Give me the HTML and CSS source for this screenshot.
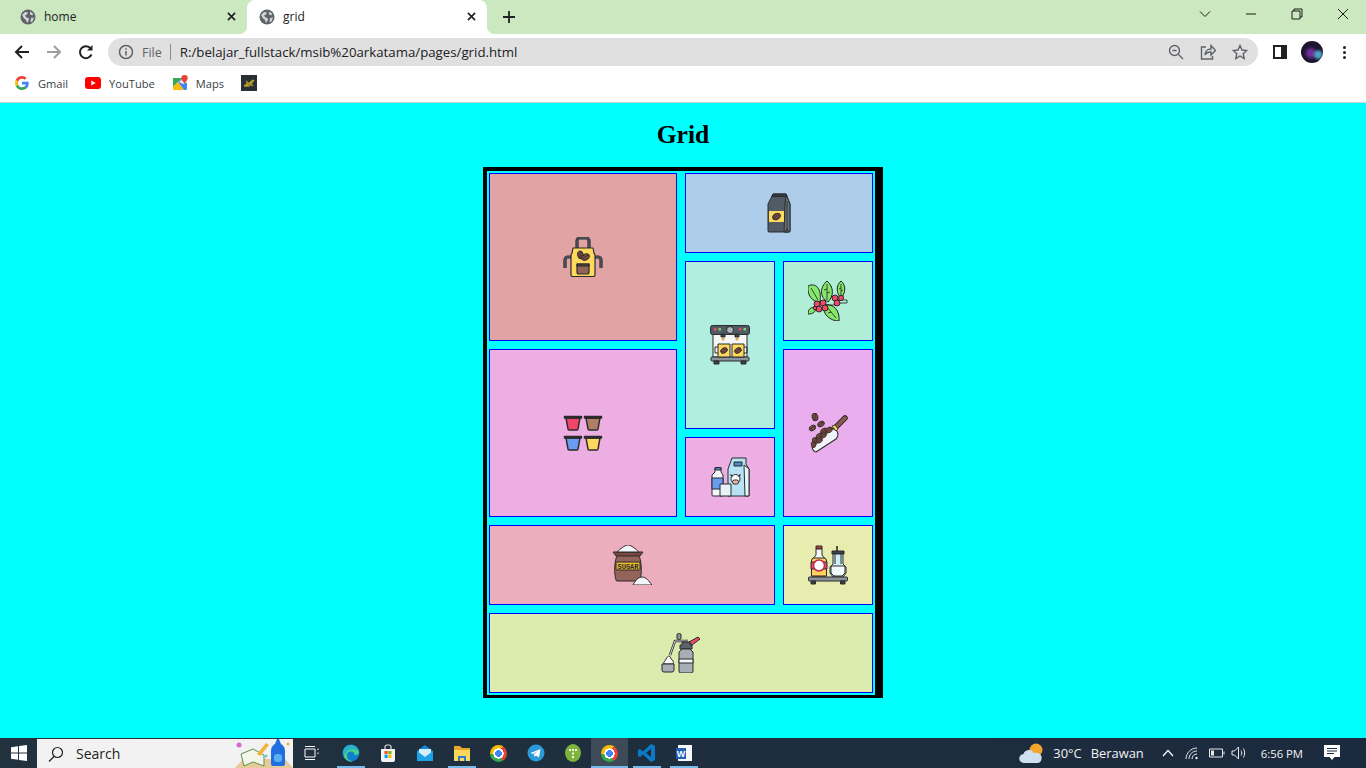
FILE: index.html
```html
<!DOCTYPE html>
<html lang="en">
<head>
<meta charset="utf-8">
<title>grid</title>
<link rel="stylesheet" href="styles.css">
</head>
<body>
<svg class="defs" width="0" height="0" aria-hidden="true">
  <defs>
    <symbol id="globe" viewBox="0 0 16 16">
      <circle cx="8" cy="8" r="7.5" fill="#5f6368"/>
      <path d="M2 6l3-3 3 .5-1 2-2 1 1.500 2 2 .5 .5 2-2 3-1-3-2-1.500zM10 2.500l3 2-.5 2-2.500-1zM11 9l3-.5-1.500 4-2 1z" fill="#cfd2d6"/>
    </symbol>
    <symbol id="bean" viewBox="0 0 10 10">
      <ellipse cx="5" cy="5" rx="4.500" ry="3.200" transform="rotate(-30 5 5)" fill="#7a4a3e" stroke="#2b2b2b"/>
      <path d="M1.500 7c3-.5 3-3.500 7-4" fill="none" stroke="#2b2b2b" stroke-width=".8"/>
    </symbol>
    <symbol id="beanv" viewBox="0 0 10 10">
      <ellipse cx="5" cy="5" rx="3.200" ry="4.500" transform="rotate(-15 5 5)" fill="#7a4a3e" stroke="#2b2b2b"/>
      <path d="M6 1c-2 3 0 5-2 8" fill="none" stroke="#2b2b2b" stroke-width=".8"/>
    </symbol>
  </defs>
</svg>

<header class="chrome-ui">
  <div class="tabstrip">
    <div class="tab tab-home">
      <svg class="fav"><use href="#globe"/></svg>
      <span class="tab-title">home</span>
      <svg class="tab-close" viewBox="0 0 10 10"><path d="M1 1l8 8M9 1l-8 8"/></svg>
    </div>
    <div class="tab tab-active">
      <svg class="fav"><use href="#globe"/></svg>
      <span class="tab-title">grid</span>
      <svg class="tab-close" viewBox="0 0 10 10"><path d="M1 1l8 8M9 1l-8 8"/></svg>
    </div>
    <svg class="newtab" viewBox="0 0 12 12"><path d="M6 0v12M0 6h12"/></svg>
    <div class="winctl">
      <div class="winbtn"><svg viewBox="0 0 12 12" class="wini"><path d="M1 3.500l5 5 5-5"/></svg></div>
      <div class="winbtn"><svg viewBox="0 0 12 12" class="wini"><path d="M1 6h10"/></svg></div>
      <div class="winbtn"><svg viewBox="0 0 12 12" class="wini"><path d="M1 3h8v8h-8zM3 3v-2h8v8h-2"/></svg></div>
      <div class="winbtn"><svg viewBox="0 0 12 12" class="wini"><path d="M1 1l10 10M11 1l-10 10"/></svg></div>
    </div>
  </div>

  <div class="toolbar">
    <div class="tbtn"><svg viewBox="0 0 16 16" class="nav"><path d="M15 8h-13M8 2l-6 6 6 6"/></svg></div>
    <div class="tbtn"><svg viewBox="0 0 16 16" class="nav nav-off"><path d="M1 8h13M8 2l6 6-6 6"/></svg></div>
    <div class="tbtn"><svg viewBox="0 0 16 16" class="nav"><path d="M13.500 10.500a6 6 0 1 1-.8-6"/><path class="solid" d="M14.500 1v5.500h-5.500z"/></svg></div>
    <div class="omnibox">
      <svg class="omni-info" viewBox="0 0 16 16"><circle cx="8" cy="8" r="6.500"/><path d="M8 7v4.500M8 4.300v1.500"/></svg>
      <span class="omni-file">File</span>
      <span class="omni-sep"></span>
      <span class="omni-url">R:/belajar_fullstack/msib%20arkatama/pages/grid.html</span>
      <div class="omni-btn"><svg viewBox="0 0 16 16" class="omni-i"><circle cx="6.500" cy="6.500" r="5"/><path d="M10.500 10.500l4.500 4.500M4.500 6.500h4"/></svg></div>
      <div class="omni-btn"><svg viewBox="0 0 16 16" class="omni-i"><path d="M6 3h-4.500v12h11v-3M5 11c0-4 3-6 6-6v-3.500l4.500 5-4.500 4.500v-3c-3 0-5 1-6 3z"/></svg></div>
      <div class="omni-btn"><svg viewBox="0 0 16 16" class="omni-i"><path d="M8 1.500l2 4.500 4.800.5-3.600 3.200 1 4.800-4.200-2.500-4.200 2.500 1-4.800-3.600-3.200 4.800-.5z"/></svg></div>
    </div>
    <div class="tbtn"><svg viewBox="0 0 14 14" class="panel"><path d="M0 0h14v14h-14zM2 2v10h6v-10z" fill-rule="evenodd"/></svg></div>
    <div class="tbtn"><div class="avatar"></div></div>
    <div class="tbtn"><div class="dots"><i></i><i></i><i></i></div></div>
  </div>

  <div class="bookmarks">
    <div class="bm">
      <svg viewBox="0 0 16 16" class="bm-i">
        <path d="M14.700 8.200c0-.5-.1-1-.1-1.400h-6.600v2.800h3.800a3.200 3.200 0 0 1-1.400 2.100l2.200 1.700c1.300-1.200 2.100-3 2.100-5.200z" fill="#4285f4"/>
        <path d="M8 15c1.900 0 3.400-.6 4.600-1.700l-2.200-1.700c-.6.400-1.400.7-2.400.7-1.800 0-3.400-1.200-3.900-2.900l-2.300 1.800c1.100 2.300 3.500 3.800 6.200 3.800z" fill="#34a853"/>
        <path d="M4.100 9.400c-.3-.9-.3-1.900 0-2.800l-2.300-1.800c-1 1.900-1 4.400 0 6.400z" fill="#fbbc05"/>
        <path d="M8 3.800c1 0 1.900.4 2.600 1l2-2c-1.300-1.100-2.900-1.800-4.600-1.800-2.700 0-5.100 1.500-6.200 3.800l2.300 1.800c.5-1.700 2.100-2.800 3.900-2.800z" fill="#ea4335"/>
      </svg>
      <span>Gmail</span>
    </div>
    <div class="bm">
      <svg viewBox="0 0 16 12" class="bm-i"><rect width="16" height="12" rx="3" fill="#f00"/><path d="M6.300 3.500l4.400 2.500-4.400 2.500z" fill="#fff"/></svg>
      <span>YouTube</span>
    </div>
    <div class="bm">
      <svg viewBox="0 0 16 16" class="bm-i">
        <path d="M1 3h9l-9 9z" fill="#34a853"/><path d="M1 12l5-5 6 8h-10a1 1 0 0 1-1-1z" fill="#fbbc05"/><path d="M6 7l4-4 5 5v6l-1 1h-2z" fill="#4285f4"/>
        <path d="M7 7l6-5 2 2-1 4-3 1z" fill="#e8eaed"/>
        <path d="M12.500 0a3.200 3.200 0 0 1 3.200 3.300c0 2-2.200 3.400-3.200 5.700-1-2.300-3.200-3.700-3.200-5.700a3.200 3.200 0 0 1 3.200-3.300z" fill="#ea4335"/>
      </svg>
      <span>Maps</span>
    </div>
    <svg viewBox="0 0 16 16" class="bm-dark"><rect width="16" height="16" fill="#2a2f33"/><path d="M3 11l4-3-2-2M12 5l-7 6h3l5-6M9 8l3 3" fill="none" stroke="#b59a2a" stroke-width="1.400"/></svg>
  </div>
</header>

<main class="page">
  <h1 class="title">Grid</h1>
  <section class="grid">
    <div class="cell c-apron">
      <svg class="ico" viewBox="0 0 40 40">
        <g stroke="#2b2b2b" stroke-width="1.200" stroke-linejoin="round">
          <path d="M14 12v-8a3 3 0 0 1 3-3h6a3 3 0 0 1 3 3v8" fill="none" stroke-width="3.200"/>
          <path d="M14 12v-8a3 3 0 0 1 3-3h6a3 3 0 0 1 3 3v8" fill="none" stroke="#4f5a66" stroke-width="1.400"/>
          <path d="M9 20h-4a3 3 0 0 0-3 3v8M31 20h4a3 3 0 0 1 3 3v8" fill="none" stroke-width="3.200"/>
          <path d="M9 20h-4a3 3 0 0 0-3 3v8M31 20h4a3 3 0 0 1 3 3v8" fill="none" stroke="#4f5a66" stroke-width="1.400"/>
          <path d="M10 11h20l1 5 1 2v20a1.500 1.500 0 0 1-1.500 1.500h-21a1.500 1.500 0 0 1-1.500-1.500v-20l1-2z" fill="#ffd95e"/>
          <path d="M14 27h12v8a2 2 0 0 1-2 2h-8a2 2 0 0 1-2-2z" fill="#94635a"/>
          <path d="M14 27h12v2h-12z" fill="#4f4040"/>
        </g>
        <use href="#beanv" x="13" y="13" width="9" height="10"/>
        <use href="#bean" x="18" y="15.500" width="9" height="9"/>
      </svg>
    </div>
    <div class="cell c-bag">
      <svg class="ico" viewBox="0 0 40 40">
        <g stroke="#2b2b2b" stroke-width="1" stroke-linejoin="round">
          <path d="M14 1h13l4 10v27a1 1 0 0 1-1 1h-20a1 1 0 0 1-1-1v-27z" fill="#505b66"/>
          <path d="M26 11l-1 28h5a1 1 0 0 0 1-1v-27l-4-10z" fill="#66717c"/>
          <path d="M14 1h13l1 2.500h-15z" fill="#343b42"/>
        </g>
        <path d="M10 18h15v11h-15z" fill="#ffd95e"/>
        <use href="#bean" x="12.500" y="19" width="10" height="9"/>
        <path d="M28 8v30M26 39l2-3 2 3" fill="none" stroke="#2b2b2b" stroke-width=".8"/>
      </svg>
    </div>
    <div class="cell c-machine">
      <svg class="ico" viewBox="0 0 40 40">
        <g stroke="#2b2b2b" stroke-width="1" stroke-linejoin="round">
          <path d="M3 9h34v23h-34z" fill="#f4f6f7"/>
          <rect x=".5" y=".5" width="39" height="9" rx="2" fill="#4f5a66"/>
          <rect x="1" y="32" width="38" height="4" rx="1" fill="#8b949c"/>
          <rect x="4" y="36" width="5" height="3" fill="#3a424a"/>
          <rect x="31" y="36" width="5" height="3" fill="#3a424a"/>
          <circle cx="20" cy="5" r="3.500" fill="#aeb6bd"/>
          <path d="M11 9h4v3h-4zM25 9h4v3h-4z" fill="#3a424a"/>
          <path d="M8 19h12v13h-12zM22 19h12v13h-12z" fill="#ffd95e"/>
          <path d="M8 22h-3v6h3M34 22h3v6h-3" fill="none"/>
        </g>
        <rect x="4" y="3" width="2.500" height="2.500" fill="#ef4a6a"/>
        <rect x="8.500" y="3" width="2.500" height="2.500" fill="#7dd36a"/>
        <rect x="29" y="3" width="2.500" height="2.500" fill="#ef4a6a"/>
        <rect x="33.500" y="3" width="2.500" height="2.500" fill="#7dd36a"/>
        <circle cx="13" cy="14" r="1.500" fill="#e2a33b"/>
        <circle cx="27" cy="14" r="1.500" fill="#e2a33b"/>
        <use href="#bean" x="10" y="21.500" width="8" height="8"/>
        <use href="#bean" x="24" y="21.500" width="8" height="8"/>
      </svg>
    </div>
    <div class="cell c-berries">
      <svg class="ico" viewBox="0 0 40 40">
        <g stroke="#1f1f1f" stroke-width="1" fill="#86e86a" stroke-linejoin="round">
          <path d="M0 5c8-4 14 3 12 16-8 0-13-7-12-16z"/>
          <path d="M19 0c7 6 7 15 1 21-9-5-8-15-1-21z"/>
          <path d="M33 0c5 4 5 12 0 17-5-5-5-13 0-17z"/>
          <path d="M16 24c10-2 16 6 15 16-9 0-17-7-15-16z"/>
          <path d="M0 33c0-5 3-7 8-7 0 5-3 7-8 7z"/>
          <path d="M3 7l7 12M19 3v16M33 3v12M19 26l9 11M30 19h9v3h-9M14 24h14M33 7l-2 1M33 10l2-1M19 8l-3 1M19 12l3-1M23 31l-3 1" fill="none" stroke-width=".8"/>
        </g>
        <g stroke="#1f1f1f" stroke-width=".9" fill="#ef4a6a">
          <circle cx="9" cy="23" r="3"/><circle cx="15" cy="22" r="3"/><circle cx="11" cy="28" r="3"/><circle cx="17" cy="27" r="3"/><circle cx="7" cy="27" r="1.800"/>
          <circle cx="27" cy="17" r="3"/><circle cx="33" cy="17" r="2.600"/><circle cx="29" cy="22" r="3"/>
        </g>
      </svg>
    </div>
    <div class="cell c-cups">
      <svg class="ico" viewBox="0 0 40 40">
        <g stroke="#2b2b2b" stroke-width="1.400" stroke-linejoin="round">
          <path d="M3 5h14l-2 11a1 1 0 0 1-1 1h-8a1 1 0 0 1-1-1z" fill="#f0446a"/>
          <path d="M23 5h14l-2 11a1 1 0 0 1-1 1h-8a1 1 0 0 1-1-1z" fill="#b07d66"/>
          <path d="M3 25h14l-2 11a1 1 0 0 1-1 1h-8a1 1 0 0 1-1-1z" fill="#6a9cf0"/>
          <path d="M23 25h14l-2 11a1 1 0 0 1-1 1h-8a1 1 0 0 1-1-1z" fill="#ffd95e"/>
          <path d="M1.500 3.500h17v1.500h-17zM21.500 3.500h17v1.500h-17zM1.500 23.500h17v1.500h-17zM21.500 23.500h17v1.500h-17z" fill="#3a424a"/>
        </g>
      </svg>
    </div>
    <div class="cell c-scoop">
      <svg class="ico" viewBox="0 0 40 40">
        <path d="M28 14l9-9" stroke="#2b2b2b" stroke-width="5.500" stroke-linecap="round"/>
        <path d="M28 14l9-9" stroke="#8a5a4a" stroke-width="3.500" stroke-linecap="round"/>
        <path d="M4 33l20-18 5 3c2 4 1 6-1 8l-20 13c-2 0-4-3-4-6z" fill="#f1f5fa" stroke="#2b2b2b" stroke-width="1.100" stroke-linejoin="round"/>
        <path d="M24 13l3-1 3 4-2 2z" fill="#ffd95e" stroke="#2b2b2b" stroke-width=".8"/>
        <use href="#beanv" x="2.500" y="-.5" width="9" height="9"/>
        <use href="#bean" x="9" y="7" width="8" height="8"/>
        <use href="#bean" x=".5" y="11" width="8" height="8"/>
        <use href="#bean" x="12" y="14" width="8" height="8"/>
        <use href="#bean" x="17" y="13" width="8" height="8"/>
        <use href="#bean" x="7.500" y="19" width="8" height="8"/>
        <use href="#bean" x="12" y="19" width="7" height="7"/>
        <use href="#beanv" x="3" y="24" width="8" height="8"/>
        <use href="#bean" x="8" y="24" width="7" height="7"/>
        <use href="#beanv" x="2" y="28" width="7" height="7"/>
      </svg>
    </div>
    <div class="cell c-milk">
      <svg class="ico" viewBox="0 0 40 40">
        <g stroke="#2b2b2b" stroke-width="1" stroke-linejoin="round">
          <path d="M22 1h14v6l3 5v27h-21v-27z" fill="#b8e3f5"/>
          <path d="M34 8l1 31h4v-27z" fill="#e6f6fc"/>
          <path d="M24 5h8v4h-8z" fill="#4f86d0"/>
          <path d="M5 11h6v4l2 3v20a1 1 0 0 1-1 1h-9a1 1 0 0 1-1-1v-20l3-3z" fill="#f4f6f7"/>
          <path d="M2 21h11v11h-11z" fill="#6a9cf0"/>
          <path d="M5 10.500h6v2.500h-6z" fill="#4f86d0"/>
          <path d="M10 27h11v12h-11z" fill="#e6f4fa"/>
          <circle cx="25.500" cy="22" r="4.500" fill="#fff"/>
          <rect x="22.500" y="23" width="6" height="4" rx="1.800" fill="#f5b5a8"/>
          <path d="M20.500 17.500l2 2M30.500 17.500l-2 2" fill="none" stroke-width="1.400"/>
        </g>
      </svg>
    </div>
    <div class="cell c-sugar">
      <svg class="ico" viewBox="0 0 40 40">
        <g stroke="#2b2b2b" stroke-width="1" stroke-linejoin="round">
          <path d="M6 8c-4 8-4 20-2 27a1 1 0 0 0 1 1h22a1 1 0 0 0 1-1c2-7 2-19-2-27z" fill="#94635a"/>
          <path d="M1 7h30l-3 4h-24z" fill="#7a4a3e"/>
          <path d="M5 7c3-3 8-7 11-7s8 4 11 7z" fill="#f1f5fa"/>
          <rect x="4" y="17" width="24" height="8" rx="1" fill="#e8b830"/>
          <path d="M21 40c2-4 5-8 9-8s7 4 10 8z" fill="#f1f5fa"/>
        </g>
        <text x="16" y="23.500" class="sugar-txt" text-anchor="middle">SUGAR</text>
      </svg>
    </div>
    <div class="cell c-syrup">
      <svg class="ico" viewBox="0 0 40 40">
        <g stroke="#2b2b2b" stroke-width="1" stroke-linejoin="round">
          <path d="M8 1h6v3h-6z" fill="#b5483a"/>
          <path d="M8 4h6v6l4 5v16h-14v-16l4-5z" fill="#f4f6f7"/>
          <path d="M5 13h12l1.500 2v16h-15v-16z" fill="#ffd15e"/>
          <path d="M3 17h16v7h-16z" fill="#ef4a6a"/>
          <circle cx="11" cy="20.500" r="5.500" fill="#fff" stroke="#c42a4a" stroke-width="1.500"/>
          <path d="M24 6h12v3h-12z" fill="#3a424a"/>
          <path d="M25 9h10v10l3 3v6l-3 4h-10l-3-4v-6l3-3z" fill="#cfeef5"/>
          <path d="M27 9v10M33 9v10" fill="none"/>
          <path d="M23 21h14v7l-3 3h-8l-3-3z" fill="#f4fbfd"/>
          <path d="M29 6v-5" fill="none" stroke-width="1.600"/>
          <rect x=".5" y="32" width="39" height="4" rx="1" fill="#8b949c"/>
          <rect x="3" y="36" width="4.500" height="3" fill="#3a424a"/>
          <rect x="32.500" y="36" width="4.500" height="3" fill="#3a424a"/>
        </g>
      </svg>
    </div>
    <div class="cell c-foam">
      <svg class="ico" viewBox="0 0 40 40">
        <g stroke="#2b2b2b" stroke-width="1" stroke-linejoin="round">
          <path d="M9 22l5-14h13" fill="none" stroke-width="2.400"/>
          <path d="M9 22l5-14h13" fill="none" stroke="#e6e8ea" stroke-width=".9"/>
          <rect x="16" y="0.500" width="4" height="6" rx="1.500" fill="#8b949c"/>
          <path d="M28 9l9-5 2 2-8 6z" fill="#ef4a6a"/>
          <path d="M21 9h8v3h2v4h-12v-4h2z" fill="#5b646c"/>
          <path d="M21 16h8l3 3v19a2 2 0 0 1-2 2h-10a2 2 0 0 1-2-2v-19z" fill="#a6aeb6"/>
          <path d="M18 26h14v4h-14z" fill="#f4f6f7"/>
          <path d="M3 31c-1-3 2-3 2-5 1-2 2-3 3-3s2 2 2 3c2 1 3 3 2 5z" fill="#fff"/>
          <path d="M1 31h12v6a2 2 0 0 1-2 2h-8a2 2 0 0 1-2-2z" fill="#a6aeb6"/>
        </g>
      </svg>
    </div>
  </section>
</main>

<footer class="taskbar">
  <div class="start"><svg viewBox="0 0 16 16" class="win"><path d="M0 2.300l7-1v6.200h-7zM8 1.100l8-1.100v7.500h-8zM0 8.500h7v6.200l-7-1zM8 8.500h8v7.500l-8-1.100z"/></svg></div>
  <div class="search">
    <svg viewBox="0 0 16 16" class="search-i"><circle cx="9.500" cy="6.500" r="5"/><path d="M6 10.500l-5 5"/></svg>
    <span class="search-txt">Search</span>
    <svg viewBox="0 0 58 29" class="search-art">
      <path d="M0 29l8-9h42l8 9z" fill="#e8c99a"/>
      <path d="M6 15l12-5 11 6v11l-11-4-9 4z" fill="#f2f5e8" stroke="#5c8f52"/>
      <path d="M22 15l9-11 3 2-9 11z" fill="#f2b23a"/>
      <circle cx="4" cy="6" r="2.500" fill="#d46ad8"/>
      <circle cx="31" cy="17" r="1.500" fill="#5ad0d0"/>
      <path d="M36 25v-13c0-4 2-6 4-7l2-5h2l2 5c2 1 4 3 4 7v13a2 2 0 0 1-2 2h-10a2 2 0 0 1-2-2z" fill="#1f6fe0"/>
      <rect x="39" y="15" width="8" height="8" rx="3" fill="#5ab0f0"/>
      <circle cx="53" cy="5" r="1.500" fill="#f2b23a"/>
    </svg>
  </div>
  <div class="tk tk-view"><svg viewBox="0 0 16 16" class="tv"><path d="M1 4h10v8h-10zM1 1.500h10M1 14.500h10M14 3.500v1.500M14 7.500v1.500"/></svg></div>
  <div class="tk tk-first tk-open">
    <svg viewBox="0 0 18 18" class="tki"><circle cx="9" cy="9" r="8.500" fill="#0f7fd0"/><path d="M2 6c2-5 12-6 15 2 0 3-4 4-5 2 1-3-7-4-7 2 0 3 2 5 6 5.500-6 1-11-4-9-11.500z" fill="#46d08a"/><path d="M1 9c0-5 3-8 8-8s8 4 8 7c-3-4-12-4-13 2z" fill="#2bb0c8"/></svg>
  </div>
  <div class="tk">
    <svg viewBox="0 0 18 18" class="tki"><path d="M2 5h14v11a2 2 0 0 1-2 2h-10a2 2 0 0 1-2-2z" fill="#f4f4f4"/><path d="M6 5v-2a2 2 0 0 1 2-2h2a2 2 0 0 1 2 2v2" fill="none" stroke="#dcdcdc" stroke-width="1.200"/><rect x="5.500" y="7" width="3.200" height="3.200" fill="#f25022"/><rect x="9.300" y="7" width="3.200" height="3.200" fill="#7fba00"/><rect x="5.500" y="10.800" width="3.200" height="3.200" fill="#00a4ef"/><rect x="9.300" y="10.800" width="3.200" height="3.200" fill="#ffb900"/></svg>
  </div>
  <div class="tk">
    <svg viewBox="0 0 18 18" class="tki"><path d="M1 7l8-6 8 6v10h-16z" fill="#0f8ad8"/><path d="M3 5h12v5l-6 4-6-4z" fill="#d6eefa"/><path d="M1 7l8 6 8-6v10h-16z" fill="#1aa3e8"/></svg>
  </div>
  <div class="tk tk-open">
    <svg viewBox="0 0 18 18" class="tki"><path d="M1 2h6l2 2h8v13h-16z" fill="#e8a92b"/><path d="M1 6h16v11h-16z" fill="#ffd65c"/><path d="M5 17v-5h8v5h-2v-3h-4v3z" fill="#2a7fc8"/></svg>
  </div>
  <div class="tk"><div class="chrome-ico"></div></div>
  <div class="tk">
    <svg viewBox="0 0 18 18" class="tki"><circle cx="9" cy="9" r="8.500" fill="#2a9ad8"/><path d="M3.500 9l10-4-1.500 8.500-3-2-1.500 1.500-.5-2.700 4-3.300-5 3z" fill="#fff"/></svg>
  </div>
  <div class="tk">
    <svg viewBox="0 0 18 18" class="tki"><ellipse cx="9" cy="9" rx="8" ry="9" fill="#7fb43c"/><g fill="#f2f8e6"><rect x="5" y="5" width="2" height="2"/><rect x="8" y="5" width="2" height="2"/><rect x="11" y="5" width="2" height="2"/><rect x="8" y="8.500" width="2" height="2"/><rect x="8" y="12" width="2" height="2"/></g></svg>
  </div>
  <div class="tk tk-active tk-open"><div class="chrome-ico"></div></div>
  <div class="tk tk-open">
    <svg viewBox="0 0 18 18" class="tki"><path d="M13 0l4 2v14l-4 2-8-7.500-3 2.500-2-1v-6l2-1 3 2.500z" fill="#0a7ac8"/><path d="M13 5l-5 4 5 4z" fill="#22262a"/></svg>
  </div>
  <div class="tk tk-open">
    <svg viewBox="0 0 18 18" class="tki"><rect x="3" y="1" width="14" height="16" fill="#f4f6fa"/><path d="M1 4h10v11h-10z" fill="#1f5fb8"/><text x="6" y="13" class="word-txt" text-anchor="middle">W</text></svg>
  </div>

  <div class="tray">
    <svg viewBox="0 0 26 22" class="weather"><circle cx="17" cy="8" r="6.500" fill="#f2a52e"/><path d="M5 21a4.500 4.500 0 0 1-.5-9c1-4 8-6 10-1 5-1 9 2 8 6-.3 2.500-2 4-4 4z" fill="#cfe0f2"/></svg>
    <span class="temp">30°C</span>
    <span class="cond">Berawan</span>
    <svg viewBox="0 0 12 8" class="tray-chev"><path d="M1 7l5-5.500 5 5.500"/></svg>
    <svg viewBox="0 0 14 14" class="tray-i"><path d="M1 13c0-6 5-11 11-11M4 13c0-4 3-8 8-8M7 13c0-3 2-5 5-5"/><circle cx="11.500" cy="12" r="1.200" class="dot"/></svg>
    <svg viewBox="0 0 16 10" class="tray-b"><path d="M.5 1h13v8h-13zM15 3.500v3"/><rect x="2" y="2.500" width="3" height="5" class="dot"/></svg>
    <svg viewBox="0 0 16 14" class="tray-v"><path d="M1 5v4h2.500l4 4v-12l-4 4zM10 4.500c1 1.500 1 3.500 0 5M12.500 2.500c1.500 3 1.500 6 0 9"/></svg>
    <span class="time">6:56 PM</span>
    <svg viewBox="0 0 16 16" class="notif"><path d="M0 0h16v12h-5.500l-2.500 3-2.500-3h-5.500zM3 3v1h10v-1zM3 5.500v1h10v-1zM3 8v1h7v-1z" fill-rule="evenodd"/></svg>
  </div>
</footer>
</body>
</html>
```
FILE: styles.css
```css
* { box-sizing: border-box; }
html, body { margin: 0; padding: 0; }
body {
  width: 1366px;
  height: 768px;
  overflow: hidden;
  display: flex;
  flex-direction: column;
  background: #00ffff;
  font-family: "Open Sans", "Noto Sans", sans-serif;
}
.defs { display: block; height: 0; }
svg { display: block; flex: none; }

/* browser chrome */
.chrome-ui { flex: none; height: 103px; background: #fff; border-bottom: 1px solid #cfcfcf; }
.tabstrip { height: 34px; background: #cce8c0; display: flex; align-items: stretch; padding-left: 7px; }
.tab { position: relative; width: 240px; display: flex; align-items: center; padding: 0 11px 1px 12px; gap: 8px; border-radius: 8px 8px 0 0; }
.tab-home { padding-left: 13px; }
.tab-active { background: #fff; }
.tab-active::before, .tab-active::after { content: ""; position: absolute; bottom: 0; width: 8px; height: 8px; }
.tab-active::before { left: -8px; background: radial-gradient(circle at 0 0, transparent 8px, #fff 8.500px); }
.tab-active::after { right: -8px; background: radial-gradient(circle at 100% 0, transparent 8px, #fff 8.500px); }
.fav { width: 16px; height: 16px; }
.tab-title { flex: 1; font-size: 12px; color: #202124; }
.tab-close { width: 9px; height: 9px; fill: none; stroke: #202124; stroke-width: 1.800; }
.newtab { width: 12px; height: 12px; margin-left: 16px; align-self: center; fill: none; stroke: #202124; stroke-width: 1.800; }
.winctl { margin-left: auto; display: flex; }
.winbtn { width: 46px; display: flex; align-items: center; justify-content: center; padding-bottom: 6px; }
.wini { width: 12px; height: 12px; fill: none; stroke: #1a1a1a; stroke-width: 1; }

.toolbar { height: 36px; display: flex; align-items: center; padding: 0 6px 0 6px; }
.tbtn { width: 32px; height: 32px; display: flex; align-items: center; justify-content: center; flex: none; }
.nav { width: 16px; height: 16px; fill: none; stroke: #202124; stroke-width: 2; }
.nav-off { stroke: #9c9ea1; }
.solid { fill: #202124; stroke: none; }
.omnibox { flex: 1; height: 28px; margin: 0 6px; border-radius: 14px; background: #e0e0e0; display: flex; align-items: center; padding: 0 2px 0 10px; }
.omni-info { width: 16px; height: 16px; fill: none; stroke: #5f6368; stroke-width: 1.500; }
.omni-file { margin-left: 8px; font-size: 12.500px; color: #5f6368; }
.omni-sep { width: 1px; height: 16px; margin: 0 9px 0 8px; background: #8a8c8f; }
.omni-url { flex: 1; font-size: 13.250px; color: #202124; }
.omni-btn { width: 32px; display: flex; justify-content: center; }
.omni-i { width: 16px; height: 16px; fill: none; stroke: #5f6368; stroke-width: 1.400; }
.panel { width: 14px; height: 14px; fill: #202124; }
.avatar { width: 22px; height: 22px; border-radius: 50%; background: radial-gradient(circle at 78% 62%, #4f9fc0 0 10%, transparent 28%), radial-gradient(circle at 45% 55%, #6f2fa0 0 14%, transparent 42%), #1d1430; }
.dots { display: flex; flex-direction: column; gap: 2px; }
.dots i { display: block; width: 3px; height: 3px; border-radius: 50%; background: #202124; }

.bookmarks { height: 32px; display: flex; align-items: center; padding: 0 0 6px 14px; }
.bm { display: flex; align-items: center; gap: 8px; margin-right: 17px; font-size: 11.100px; color: #3c4043; }
.bm-i { width: 16px; height: 16px; }
.bm-dark { width: 16px; height: 16px; }

/* page */
.page { flex: 1; padding-top: 17px; display: flex; flex-direction: column; align-items: center; }
.title { margin: 0 0 17px; font: bold 25.600px/30px "Liberation Serif", serif; color: #000; }
.grid {
  width: 400px;
  height: 531px;
  border: 4px solid #000;
  border-right-width: 8px;
  border-bottom-width: 3px;
  padding: 2px;
  display: grid;
  grid-template-columns: repeat(4, 90px);
  grid-template-rows: repeat(6, 80px);
  gap: 8px;
}
.cell { border: 1px solid #0000ff; display: flex; align-items: center; justify-content: center; }
.ico { width: 40px; height: 40px; }
.c-apron { grid-column: 1 / 3; grid-row: 1 / 3; background: #e1a3a3; }
.c-bag { grid-column: 3 / 5; grid-row: 1; background: #aecdeb; }
.c-machine { grid-column: 3; grid-row: 2 / 4; background: #b0eee0; }
.c-berries { grid-column: 4; grid-row: 2; background: #b0eed8; }
.c-cups { grid-column: 1 / 3; grid-row: 3 / 5; background: #ecaee3; }
.c-scoop { grid-column: 4; grid-row: 3 / 5; background: #eaaeee; }
.c-milk { grid-column: 3; grid-row: 4; background: #ecaee3; }
.c-sugar { grid-column: 1 / 4; grid-row: 5; background: #ecaebd; }
.c-syrup { grid-column: 4; grid-row: 5; background: #e8ecae; }
.c-foam { grid-column: 1 / 5; grid-row: 6; background: #dcecae; }
.sugar-txt { font: bold 7px "Liberation Mono", monospace; fill: #2b2b2b; }
.word-txt { font: bold 9px "Liberation Sans", sans-serif; fill: #fff; }

/* taskbar */
.taskbar { flex: none; height: 30px; display: flex; align-items: stretch; background: linear-gradient(90deg, #22323e, #1b2a3e); color: #fff; }
.start { width: 37px; display: flex; align-items: center; justify-content: center; }
.win { width: 16px; height: 16px; fill: #fff; }
.search { width: 256px; margin-top: 1px; background: #f2f2f2; display: flex; align-items: center; padding-left: 11px; }
.search-i { width: 16px; height: 16px; fill: none; stroke: #222; stroke-width: 1.200; }
.search-txt { flex: 1; margin-left: 12px; font-size: 14px; color: #222; }
.search-art { width: 58px; height: 29px; }
.tk { position: relative; width: 37px; display: flex; align-items: center; justify-content: center; }
.tk-first { margin-left: 2px; }
.tk-active { background: #3c4b57; }
.tk-open::after { content: ""; position: absolute; left: 5px; right: 4px; bottom: 0; height: 2px; background: #76b9ed; }
.tk-active.tk-open::after { left: 0; right: 0; }
.tv { width: 16px; height: 16px; fill: none; stroke: #fff; stroke-width: 1; }
.tki { width: 18px; height: 18px; }
.chrome-ico {
  width: 17px; height: 17px; border-radius: 50%;
  background: radial-gradient(circle, #4285f4 0 29%, #fff 30% 42%, transparent 43%), conic-gradient(from 30deg, #ea4335 0 120deg, #34a853 120deg 240deg, #fbbc05 240deg 360deg);
}
.tray { margin-left: auto; display: flex; align-items: center; padding-right: 26px; font-size: 12.900px; color: #f2f2f2; }
.weather { width: 26px; height: 22px; margin-right: 8px; }
.temp { margin-right: 9px; }
.cond { margin-right: 18px; }
.tray-chev { width: 12px; height: 8px; margin-right: 11px; fill: none; stroke: #fff; stroke-width: 1.200; }
.tray-i { width: 14px; height: 14px; margin-right: 10px; fill: none; stroke: #e8e8e8; stroke-width: 1; }
.tray-b { width: 16px; height: 10px; margin-right: 6px; fill: none; stroke: #e8e8e8; stroke-width: 1; }
.tray-v { width: 16px; height: 14px; margin-right: 14px; fill: none; stroke: #e8e8e8; stroke-width: 1; }
.dot { fill: #e8e8e8; stroke: none; }
.time { font-size: 11.300px; margin-right: 21px; }
.notif { width: 16px; height: 16px; fill: #fff; }
```
